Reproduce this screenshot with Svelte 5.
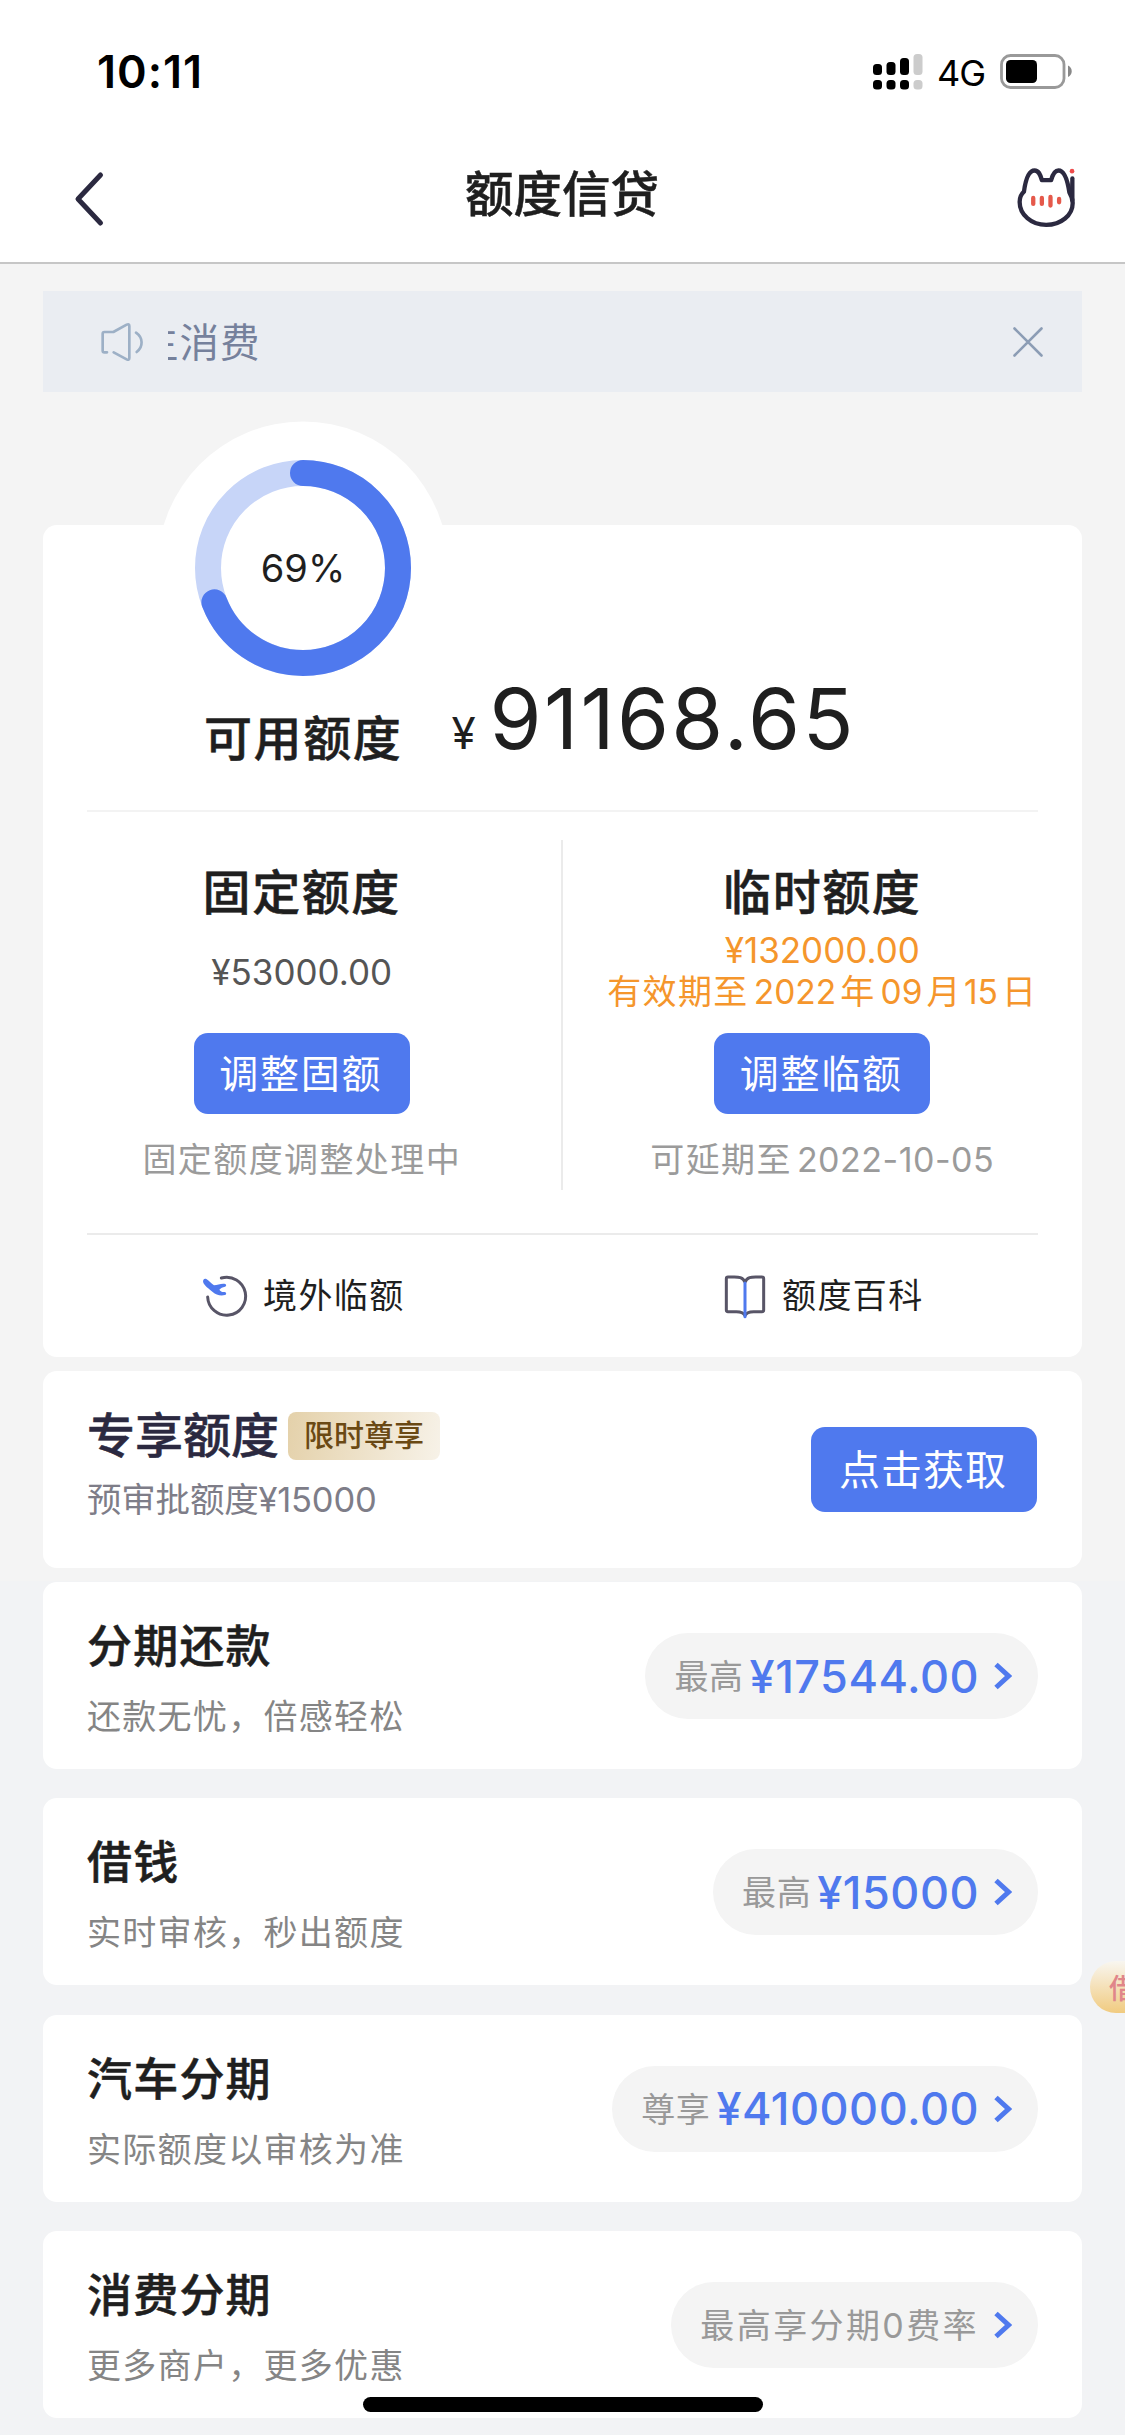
<script lang="ts">
  /**
   * Credit limit overview
   *
   * Shows the available limit ring, the fixed and temporary limits,
   * and the list of loan products.
   */

  interface Product {
    title: string
    desc: string
    label: string
    amount?: string
  }

  const used = 69
  const radius = 95
  const circumference = 2 * Math.PI * radius

  const products: Product[] = [
    { title: '分期还款', desc: '还款无忧，倍感轻松', label: '最高', amount: '¥17544.00' },
    { title: '借钱', desc: '实时审核，秒出额度', label: '最高', amount: '¥15000' },
    { title: '汽车分期', desc: '实际额度以审核为准', label: '尊享', amount: '¥410000.00' },
    { title: '消费分期', desc: '更多商户，更多优惠', label: '最高享分期0费率' },
  ]

  let noticeOpen = $state(true)
  let dash = $derived((circumference * used) / 100)
</script>

<div class="page" lang="zh-CN">
  <header class="header">
    <div class="status">
      <span class="time">10:11</span>
      <div class="status-right">
        <svg class="signal" width="50" height="36" viewBox="0 0 50 36">
          <rect x="0" y="10" width="9" height="11" rx="3.5" />
          <rect x="13.5" y="8" width="9" height="13" rx="3.5" />
          <rect x="27" y="4" width="9" height="17" rx="3.5" />
          <rect x="40.5" y="0" width="9" height="21" rx="3.5" fill="#ccc" />
          <rect x="0" y="26" width="9" height="9.5" rx="3.5" />
          <rect x="13.5" y="26" width="9" height="9.5" rx="3.5" />
          <rect x="27" y="26" width="9" height="9.5" rx="3.5" />
          <rect x="40.5" y="26" width="9" height="9.5" rx="3.5" fill="#ccc" />
        </svg>
        <span class="network">4G</span>
        <svg class="battery" width="73" height="35" viewBox="0 0 73 35">
          <rect x="1.5" y="1.5" width="62.5" height="32" rx="9" fill="none" stroke="#999" stroke-width="2.8" />
          <rect x="6" y="6" width="31" height="23" rx="4.5" />
          <path d="M68 11.5c5 2.5 5 9 0 11.5z" fill="#888" />
        </svg>
      </div>
    </div>
    <nav class="nav">
      <button class="icon-btn back" aria-label="返回">
        <svg width="32" height="56" viewBox="0 0 32 56">
          <path d="M27.5 4L5 28l22.5 24" fill="none" stroke="#2b2940" stroke-width="5" stroke-linecap="round" stroke-linejoin="round" />
        </svg>
      </button>
      <h1>额度信贷</h1>
      <button class="icon-btn service" aria-label="客服">
        <svg width="63" height="65" viewBox="0 0 190 195">
          <g fill="none" stroke="#2b2940" stroke-width="13" stroke-linecap="round" stroke-linejoin="round">
            <path d="M27 80C31 50 40 16 59 16c12 0 17 11 22 29h28c5-18 12-29 22-29 15 0 26 20 33 66 7 12 10 21 10 32 0 37-35 66-80 66s-80-31-80-69c0-12 4-23 13-31z" />
            <path d="M173 40v65" />
          </g>
          <path d="M166 50l-3 30 10 20z" fill="#2b2940" />
          <g stroke="#e5594b" stroke-width="13" stroke-linecap="round">
            <path d="M55 99v18M81 99v18M107 96v26M133 102v10" />
          </g>
          <circle cx="172" cy="18" r="7" fill="#ee4b4b" />
        </svg>
      </button>
    </nav>
  </header>

  <main class="content">
    {#if noticeOpen}
      <div class="notice">
        <svg class="speaker" width="44" height="42" viewBox="0 0 132 126" fill="none" stroke="#9db0c6" stroke-width="8" stroke-linecap="round" stroke-linejoin="round">
          <path d="M21 94h-8q-5 0-5-5V38q0-5 5-5h27l40-22q8-4 8 4v96q0 8-8 4L41 94" />
          <path d="M108 35c22 15 22 43 2 58" />
        </svg>
        <div class="marquee"><span>生消费</span></div>
        <button class="icon-btn" aria-label="关闭" onclick={() => (noticeOpen = false)}>
          <svg width="30" height="30" viewBox="0 0 30 30">
            <path d="M1.5 1.5l27 27M28.5 1.5l-27 27" stroke="#8c9db5" stroke-width="2.6" stroke-linecap="round" />
          </svg>
        </button>
      </div>
    {/if}

    <section class="card limit">
      <div class="ring-wrap">
        <svg width="294" height="294" viewBox="-147 -147 294 294">
          <circle cy="-1" r="145.5" fill="#fff" />
          <circle r={radius} fill="none" stroke="#c7d5f8" stroke-width="26" />
          <circle
            r={radius}
            fill="none"
            stroke="#4f79ee"
            stroke-width="26"
            stroke-linecap="round"
            stroke-dasharray="{dash} {circumference}"
            transform="rotate(-90)"
          />
        </svg>
        <span class="percent">{used}%</span>
      </div>

      <div class="available">
        <h2>可用额度</h2>
        <div class="balance">
          <span class="currency">¥</span>
          <span class="total">91168.65</span>
        </div>
      </div>

      <div class="split">
        <div class="col">
          <h2>固定额度</h2>
          <div class="detail">
            <p>¥53000.00</p>
          </div>
          <button class="primary">调整固额</button>
          <p class="hint">固定额度调整处理中</p>
        </div>
        <div class="col">
          <h2>临时额度</h2>
          <div class="detail temp">
            <p>¥132000.00</p>
            <p class="expiry">有效期至<i>2022</i>年<i>09</i>月<i class="tight">15</i>日</p>
          </div>
          <button class="primary">调整临额</button>
          <p class="hint">可延期至<i>2022-10-05</i></p>
        </div>
      </div>

      <div class="links">
        <a class="link" href="#abroad">
          <svg width="48" height="48" viewBox="0 0 144 144">
            <path d="M63 18A57 57 0 1 1 22 75" transform="translate(-5 0)" fill="none" stroke="#585567" stroke-width="9" stroke-linecap="round" />
            <path d="M4 32c-3-7 2-14 9-11 7 3 15 14 23 19 11 0 22-7 34-4 4 2 3 7-1 8-7 1-13 4-17 9 4 6 9 8 16 7 6 1 6 8 1 9-14 4-27-1-37-9C20 50 7 40 4 32z" fill="#4f79ee" />
          </svg>
          <span>境外临额</span>
        </a>
        <a class="link" href="#wiki">
          <svg width="48" height="48" viewBox="0 0 144 144">
            <path d="M72 31C66 15 52 15 40 15H21q-5 0-5 5v94q0 5 5 5h25c14 0 22 2 26 12 4-10 12-12 26-12h25q5 0 5-5V20q0-5-5-5h-19C92 15 78 15 72 31z" fill="none" stroke="#585567" stroke-width="9" stroke-linejoin="round" />
            <path d="M72 33v101" stroke="#4f79ee" stroke-width="9" stroke-linecap="round" />
          </svg>
          <span>额度百科</span>
        </a>
      </div>
    </section>

    <section class="card exclusive">
      <div>
        <div class="exclusive-title">
          <h2>专享额度</h2>
          <span class="tag">限时尊享</span>
        </div>
        <p>预审批额度¥15000</p>
      </div>
      <button class="primary get">点击获取</button>
    </section>

    <div class="products">
      {#each products as product}
        <section class="card product">
          <div>
            <h3>{product.title}</h3>
            <p>{product.desc}</p>
          </div>
          <button class="pill">
            <span class="pill-label" class:solo={!product.amount}>{product.label}</span>
            {#if product.amount}
              <span class="amount">{product.amount}</span>
            {/if}
            <svg width="18" height="28" viewBox="0 0 18 28">
              <path d="M2 2.5L14.5 14 2 25.5" fill="none" stroke="#4f79ee" stroke-width="5" />
            </svg>
          </button>
        </section>
      {/each}
    </div>
  </main>

  <button class="float">借钱</button>
  <div class="home-indicator"></div>
</div>

<style>
  :global(body) {
    margin: 0;
  }

  .page {
    position: relative;
    width: 1125px;
    height: 2435px;
    overflow: hidden;
    background: linear-gradient(#f4f4f4 1581px, #f2f3f5 1581px);
    color: #1f1f1f;
    font-family: Inter, 'Noto Sans CJK SC', sans-serif;
  }

  h1,
  h2,
  h3,
  p {
    margin: 0;
    font-weight: 500;
    white-space: nowrap;
  }

  h1,
  h2,
  h3 {
    -webkit-text-stroke: 0.5px currentColor;
  }

  p {
    font-weight: 400;
  }

  i {
    margin: 0 5px 0 5px;
    font-style: normal;
    letter-spacing: 0.5px;
  }

  button {
    padding: 0;
    border: none;
    background: none;
    font-family: inherit;
    cursor: pointer;
  }

  svg {
    display: block;
    flex: none;
  }

  .header {
    box-sizing: border-box;
    height: 264px;
    background: #fff;
    border-bottom: 2px solid #c6c6c6;
  }

  .status {
    display: flex;
    justify-content: space-between;
    height: 142px;
    padding: 0 52px 0 97px;
    color: #000;
  }

  .time {
    margin-top: 44px;
    font-size: 45px;
    line-height: 56px;
    font-weight: 600;
    letter-spacing: 1px;
  }

  .status-right {
    display: flex;
    align-items: flex-start;
    padding-top: 54px;
  }

  .network {
    width: 47px;
    margin: -1px 16px 0 14px;
    font-size: 36px;
    line-height: 40px;
    letter-spacing: -1px;
  }

  .nav {
    display: flex;
    justify-content: space-between;
    align-items: center;
    height: 106px;
    padding: 0 47px 0 73px;
  }

  h1 {
    margin: -1px 0 0 4px;
    font-size: 48.5px;
    line-height: 60px;
  }

  .back {
    margin-top: 8px;
  }

  .service {
    margin-top: 5px;
  }

  .content {
    padding: 27px 43px 0;
  }

  .notice {
    display: flex;
    align-items: center;
    height: 101px;
    padding: 0 39px 0 57px;
    background: #eaedf2;
  }

  .marquee {
    flex: 1;
    margin: 2px 0 0 24px;
    overflow: hidden;
    color: #76819c;
    font-size: 39.5px;
    line-height: 60px;
    letter-spacing: 1px;
    white-space: nowrap;
  }

  .marquee span {
    margin-left: -29px;
  }

  .card {
    box-sizing: border-box;
    border-radius: 14px;
    background: #fff;
  }

  .limit {
    height: 832px;
    margin-top: 133px;
    padding: 0 44px;
  }

  .ring-wrap {
    position: relative;
    width: 294px;
    height: 294px;
    margin-left: 69px;
    top: -104px;
  }

  .percent {
    position: absolute;
    inset: 0;
    display: grid;
    place-items: center;
    font-size: 38px;
  }

  .available {
    display: flex;
    box-sizing: border-box;
    height: 123px;
    margin-top: -130px;
    padding: 20px 0 0 117px;
    border-bottom: 2px solid #f3f3f3;
  }

  .limit h2 {
    font-size: 48px;
    line-height: 60px;
    letter-spacing: 1.6px;
  }

  .balance {
    display: flex;
    align-items: baseline;
    height: 84px;
    margin: -32px 0 0 49px;
  }

  .currency {
    font-size: 44px;
    line-height: 1;
  }

  .total {
    margin-left: 14px;
    font-size: 84px;
    line-height: 84px;
    letter-spacing: 2.3px;
  }

  .split {
    display: grid;
    grid-template-columns: 1fr 1fr;
    box-sizing: border-box;
    height: 421px;
    margin: 0 -44px;
    padding-top: 28px;
  }

  .col {
    display: flex;
    flex-direction: column;
    align-items: center;
    box-sizing: border-box;
    height: 350px;
    padding-top: 23px;
  }

  .col:first-child {
    border-right: 2px solid #ebebeb;
  }

  .detail {
    display: grid;
    align-content: center;
    height: 98px;
    margin-bottom: 12px;
    color: #555;
    font-size: 35px;
    line-height: 41px;
  }

  .temp {
    justify-items: center;
    height: 96px;
    margin-bottom: 14px;
    color: #f5962c;
  }

  .expiry {
    font-size: 34px;
    letter-spacing: 1.4px;
  }

  .expiry i {
    margin-right: 4px;
    font-size: 33.5px;
    letter-spacing: 0;
  }

  .expiry .tight {
    margin-left: 2px;
  }

  .primary {
    width: 216px;
    height: 81px;
    flex: none;
    padding: 0 2px 5px 0;
    border-radius: 14px;
    background: #4f79ee;
    color: #fff;
    font-size: 39px;
    letter-spacing: 1.7px;
  }

  .hint {
    margin-top: 23px;
    color: #9b9b9b;
    font-size: 34px;
    line-height: 46px;
    letter-spacing: 1.4px;
  }

  .hint i {
    margin-right: 0;
  }

  .links {
    display: grid;
    grid-template-columns: 519px 1fr;
    height: 122px;
    border-top: 2px solid #ebebeb;
  }

  .link {
    display: flex;
    align-items: center;
    gap: 13px;
    padding-left: 115px;
    color: #1f1f1f;
    font-size: 34px;
    letter-spacing: 1.4px;
    text-decoration: none;
  }

  .link span {
    margin-top: -5px;
  }

  .exclusive {
    display: flex;
    justify-content: space-between;
    height: 197px;
    margin: 14px 0;
    padding: 35px 45px 0 44px;
  }

  .exclusive-title {
    display: flex;
    align-items: center;
    gap: 9px;
    color: #2b2940;
    font-size: 48px;
    line-height: 60px;
  }

  .exclusive h2 {
    font-size: 48px;
  }

  .tag {
    width: 152px;
    height: 48px;
    border-radius: 8px;
    background: linear-gradient(100deg, #e4d1aa, #f7f2e8);
    color: #6a4914;
    font-size: 30px;
    line-height: 47px;
    font-weight: 500;
    text-align: center;
  }

  .exclusive p {
    margin-top: 11px;
    color: #7e7d88;
    font-size: 34.5px;
    line-height: 46px;
    letter-spacing: -0.2px;
  }

  .get {
    width: 226px;
    height: 85px;
    margin-top: 21px;
    font-size: 41px;
    letter-spacing: 1px;
  }

  .products {
    display: grid;
    gap: 29.4px;
  }

  .product {
    display: flex;
    justify-content: space-between;
    align-items: flex-start;
    height: 187px;
    padding: 35px 44px 0;
  }

  h3 {
    font-size: 45px;
    line-height: 60px;
    letter-spacing: 1.2px;
  }

  .product p {
    margin-top: 17px;
    color: #858585;
    font-size: 34px;
    line-height: 46px;
    letter-spacing: 1.3px;
  }

  .pill {
    display: flex;
    align-items: center;
    height: 86px;
    margin-top: 16px;
    padding: 0 26px 0 29px;
    border-radius: 43px;
    background: #f4f4f4;
  }

  .pill-label {
    margin-top: -3px;
    color: #999;
    font-size: 34px;
    letter-spacing: 0.6px;
  }

  .pill-label.solo {
    letter-spacing: 2.4px;
  }

  .amount {
    margin-left: 6px;
    color: #4f79ee;
    font-size: 45px;
    font-weight: 500;
    letter-spacing: 0.5px;
  }

  .pill svg {
    margin-left: 15px;
  }

  .float {
    position: absolute;
    top: 1961px;
    left: 1090px;
    width: 90px;
    height: 52px;
    padding-left: 19px;
    border-radius: 26px;
    background: linear-gradient(#f8f6f0, #f1cb80);
    color: #e0868a;
    font-size: 28px;
    font-weight: 500;
    text-align: left;
    white-space: nowrap;
  }

  .home-indicator {
    position: absolute;
    top: 2397px;
    left: 363px;
    width: 400px;
    height: 15px;
    border-radius: 8px;
    background: #000;
  }
</style>
